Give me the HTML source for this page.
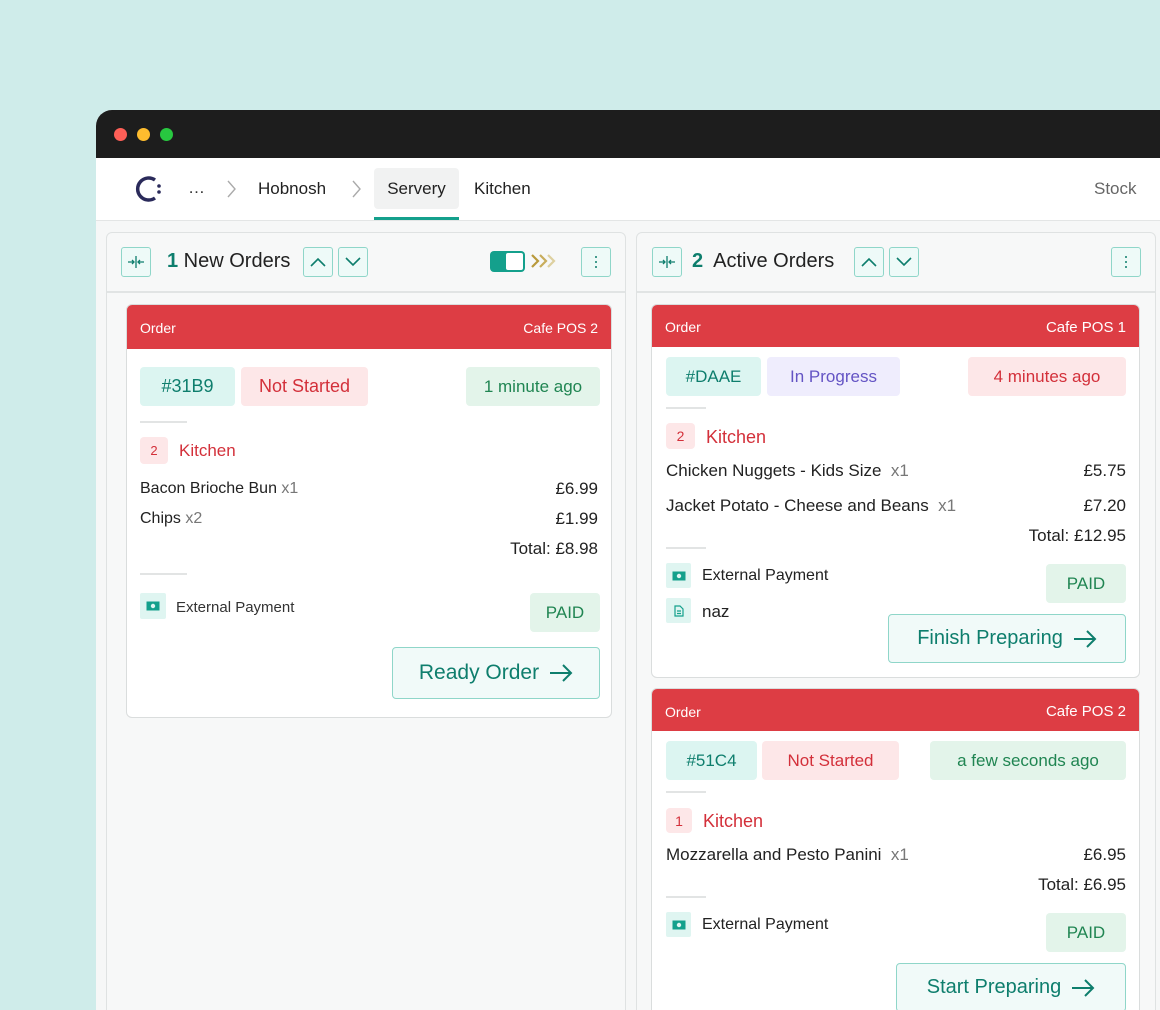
<!DOCTYPE html>
<html><head><meta charset="utf-8"><style>
*{box-sizing:border-box;margin:0;padding:0}
body{width:1160px;height:1000px;overflow:hidden;background:#cfecea;font-family:"Liberation Sans",sans-serif;position:relative;color:#222}
.a{position:absolute}
.win{left:96px;top:110px;width:1080px;height:900px;background:#f6f7f7;border-radius:16px 0 0 0;overflow:hidden}
.tb{left:0;top:0;width:100%;height:48px;background:#1d1d1d}
.dot{width:13px;height:13px;border-radius:50%;top:18px}
.nav{left:0;top:48px;width:100%;height:63px;background:#fff;border-bottom:1px solid #e3e5e5}
.col{background:#f7f8f8;border:1px solid #dfe2e2;border-radius:6px}
.chd{border-bottom:2px solid #e1e4e4}
.ib{width:30px;height:30px;border:1.5px solid #8fd6c9;background:#eefaf8;border-radius:3px;display:flex;align-items:center;justify-content:center}
.card{background:#fff;border:1px solid #dadddd;border-radius:6px;overflow:hidden}
.rh{left:0;top:0;width:100%;background:#dd3d44;color:#fff;font-size:14px}
.bd{border-radius:4px;display:flex;align-items:center;justify-content:center;font-size:18px;height:39px}
.t{background:#dcf5f1;color:#0e7e6d}
.r{background:#fde7e8;color:#d3303a}
.g{background:#e3f4ea;color:#208552}
.p{background:#efedfd;color:#6454c4}
.hr{width:47px;height:2px;background:#e2e4e4}
.btn{border:1.5px solid #8fd6c9;background:#f1faf9;border-radius:4px;color:#0e7e6d;font-size:21px;display:flex;align-items:center;justify-content:center;gap:10px}
.sq{width:26px;height:26px;background:#dff5f1;border-radius:2px;display:flex;align-items:center;justify-content:center}
</style></head><body>
<div class="a win">
 <div class="a tb">
  <div class="a dot" style="left:18px;background:#fe5f57"></div>
  <div class="a dot" style="left:41px;background:#febc2e"></div>
  <div class="a dot" style="left:64px;background:#28c840"></div>
 </div>
 <div class="a nav">
  <svg class="a" style="left:37px;top:15px" width="30" height="32" viewBox="0 0 30 32"><path d="M22 7 A11 11 0 1 0 22 25" fill="none" stroke="#2a2a5a" stroke-width="3.5"/><circle cx="26" cy="13" r="1.8" fill="#2a2a5a"/><circle cx="26" cy="19" r="1.8" fill="#2a2a5a"/></svg>
  <div class="a" style="left:92px;top:20px;font-size:17px;color:#333">…</div>
  <svg class="a" style="left:131px;top:22px" width="10" height="18"><path d="M1 1l7 8-7 8" stroke="#aaa" stroke-width="1.4" fill="none"/></svg>
  <div class="a" style="left:162px;top:21px;font-size:17px;color:#222">Hobnosh</div>
  <svg class="a" style="left:256px;top:22px" width="10" height="18"><path d="M1 1l7 8-7 8" stroke="#aaa" stroke-width="1.4" fill="none"/></svg>
  <div class="a" style="left:278px;top:10px;width:85px;height:41px;background:#f1f2f2;border-radius:4px;font-size:17px;text-align:center;line-height:41px">Servery</div>
  <div class="a" style="left:278px;top:59px;width:85px;height:3px;background:#14a08c"></div>
  <div class="a" style="left:378px;top:21px;font-size:17px">Kitchen</div>
  <div class="a" style="left:998px;top:21px;font-size:17px;color:#666">Stock</div>
 </div>

 <div class="a col" style="left:10px;top:122px;width:520px;height:800px">
  <div class="a chd" style="left:0;top:0;width:100%;height:60px">
   <div class="a ib" style="left:14px;top:14px"><svg width="18" height="12" viewBox="0 0 18 12" stroke="#0e7e6d" stroke-width="1.3" fill="none"><path d="M9 0v12M1 6h6M5 4l2 2-2 2M17 6h-6M13 4l-2 2 2 2"/></svg></div>
   <div class="a" style="left:60px;top:17px;font-size:20px"><b style="color:#0e7e6d">1</b> New Orders</div>
   <div class="a ib" style="left:196px;top:14px"><svg width="16" height="10"><path d="M1 9l7-7 7 7" stroke="#0e7e6d" stroke-width="1.6" fill="none"/></svg></div>
   <div class="a ib" style="left:231px;top:14px"><svg width="16" height="10"><path d="M1 1l7 7 7-7" stroke="#0e7e6d" stroke-width="1.6" fill="none"/></svg></div>
   <div class="a" style="left:383px;top:18px;width:35px;height:21px;background:#14a08c;border-radius:4px"><div class="a" style="left:16px;top:2px;width:17px;height:17px;background:#fff;border-radius:2px"></div></div>
   <svg class="a" style="left:423px;top:20px" width="28" height="16" viewBox="0 0 28 16" fill="none" stroke-width="2.2"><path d="M2 2l6 6-6 6" stroke="#b99a3c"/><path d="M10 2l6 6-6 6" stroke="#c8ad5c"/><path d="M18 2l6 6-6 6" stroke="#ddd0a0"/></svg>
   <div class="a ib" style="left:474px;top:14px"><svg width="4" height="14"><circle cx="2" cy="2" r="1" fill="#0e7e6d"/><circle cx="2" cy="7" r="1" fill="#0e7e6d"/><circle cx="2" cy="12" r="1" fill="#0e7e6d"/></svg></div>
  </div>
 </div>
 <div class="a card" style="left:30px;top:194px;width:486px;height:414px">
  <div class="a rh" style="height:44px"><span class="a" style="left:13px;top:15px">Order</span><span class="a" style="right:13px;top:15px">Cafe POS 2</span></div>
  <div class="a bd t" style="left:13px;top:62px;width:95px">#31B9</div>
  <div class="a bd r" style="left:114px;top:62px;width:127px">Not Started</div>
  <div class="a bd g" style="left:339px;top:62px;width:134px;font-size:17px">1 minute ago</div>
  <div class="a hr" style="left:13px;top:116px"></div>
  <div class="a bd r" style="left:13px;top:132px;width:28px;height:27px;font-size:13px">2</div>
  <div class="a" style="left:52px;top:136px;font-size:17px;color:#d3303a">Kitchen</div>
  <div class="a" style="left:13px;top:175px;font-size:16px">Bacon Brioche Bun <span style="color:#777">x1</span></div>
  <div class="a" style="right:13px;top:174px;font-size:17px">£6.99</div>
  <div class="a" style="left:13px;top:205px;font-size:16px">Chips <span style="color:#777">x2</span></div>
  <div class="a" style="right:13px;top:204px;font-size:17px">£1.99</div>
  <div class="a" style="right:13px;top:234px;font-size:17px">Total: £8.98</div>
  <div class="a hr" style="left:13px;top:268px"></div>
  <div class="a sq" style="left:13px;top:288px"><svg width="14" height="10"><rect x="0.5" y="0.5" width="13" height="9" fill="#14a08c"/><circle cx="7" cy="5" r="2.2" fill="#dff5f1"/></svg></div>
  <div class="a" style="left:49px;top:294px;font-size:15px;color:#333">External Payment</div>
  <div class="a bd g" style="left:403px;top:288px;width:70px;font-size:17px">PAID</div>
  <div class="a btn" style="left:265px;top:342px;width:208px;height:52px">Ready Order <svg width="24" height="18"><path d="M1 9h21M14 1l8 8-8 8" stroke="#0e7e6d" stroke-width="2" fill="none"/></svg></div>
 </div>

 <div class="a col" style="left:540px;top:122px;width:520px;height:800px">
  <div class="a chd" style="left:0;top:0;width:100%;height:60px">
   <div class="a ib" style="left:15px;top:14px"><svg width="18" height="12" viewBox="0 0 18 12" stroke="#0e7e6d" stroke-width="1.3" fill="none"><path d="M9 0v12M1 6h6M5 4l2 2-2 2M17 6h-6M13 4l-2 2 2 2"/></svg></div>
   <div class="a" style="left:55px;top:17px;font-size:20px"><b style="color:#0e7e6d">2</b>&nbsp; Active Orders</div>
   <div class="a ib" style="left:217px;top:14px"><svg width="16" height="10"><path d="M1 9l7-7 7 7" stroke="#0e7e6d" stroke-width="1.6" fill="none"/></svg></div>
   <div class="a ib" style="left:252px;top:14px"><svg width="16" height="10"><path d="M1 1l7 7 7-7" stroke="#0e7e6d" stroke-width="1.6" fill="none"/></svg></div>
   <div class="a ib" style="left:474px;top:14px"><svg width="4" height="14"><circle cx="2" cy="2" r="1" fill="#0e7e6d"/><circle cx="2" cy="7" r="1" fill="#0e7e6d"/><circle cx="2" cy="12" r="1" fill="#0e7e6d"/></svg></div>
  </div>
 </div>
 <div class="a card" style="left:555px;top:194px;width:489px;height:374px">
  <div class="a rh" style="height:42px"><span class="a" style="left:13px;top:14px">Order</span><span class="a" style="right:13px;top:14px;font-size:15px">Cafe POS 1</span></div>
  <div class="a bd t" style="left:14px;top:52px;width:95px;font-size:17px">#DAAE</div>
  <div class="a bd p" style="left:115px;top:52px;width:133px;font-size:17px">In Progress</div>
  <div class="a bd r" style="left:316px;top:52px;width:158px;font-size:17px">4 minutes ago</div>
  <div class="a hr" style="left:14px;top:102px;width:40px"></div>
  <div class="a bd r" style="left:14px;top:118px;width:29px;height:26px;font-size:14px">2</div>
  <div class="a" style="left:54px;top:122px;font-size:18px;color:#d3303a">Kitchen</div>
  <div class="a" style="left:14px;top:156px;font-size:17px">Chicken Nuggets - Kids Size&nbsp; <span style="color:#777">x1</span></div>
  <div class="a" style="right:13px;top:156px;font-size:17px">£5.75</div>
  <div class="a" style="left:14px;top:191px;font-size:17px">Jacket Potato - Cheese and Beans&nbsp; <span style="color:#777">x1</span></div>
  <div class="a" style="right:13px;top:191px;font-size:17px">£7.20</div>
  <div class="a" style="right:13px;top:221px;font-size:17px">Total: £12.95</div>
  <div class="a hr" style="left:14px;top:242px;width:40px"></div>
  <div class="a sq" style="left:14px;top:258px;width:25px;height:25px"><svg width="14" height="10"><rect x="0.5" y="0.5" width="13" height="9" fill="#14a08c"/><circle cx="7" cy="5" r="2.2" fill="#dff5f1"/></svg></div>
  <div class="a" style="left:50px;top:262px;font-size:16px">External Payment</div>
  <div class="a bd g" style="left:394px;top:259px;width:80px;font-size:17px">PAID</div>
  <div class="a sq" style="left:14px;top:293px;width:25px;height:25px"><svg width="10" height="12"><path d="M1 1h5l3 3v7H1z M3 6h4M3 8.5h4" stroke="#14a08c" stroke-width="1.2" fill="none"/></svg></div>
  <div class="a" style="left:50px;top:297px;font-size:17px">naz</div>
  <div class="a btn" style="left:236px;top:309px;width:238px;height:49px;font-size:20px">Finish Preparing <svg width="24" height="18"><path d="M1 9h21M14 1l8 8-8 8" stroke="#0e7e6d" stroke-width="2" fill="none"/></svg></div>
 </div>
 <div class="a card" style="left:555px;top:578px;width:489px;height:340px">
  <div class="a rh" style="height:42px"><span class="a" style="left:13px;top:15px">Order</span><span class="a" style="right:13px;top:14px;font-size:15px">Cafe POS 2</span></div>
  <div class="a bd t" style="left:14px;top:52px;width:91px;font-size:17px">#51C4</div>
  <div class="a bd r" style="left:110px;top:52px;width:137px;font-size:17px">Not Started</div>
  <div class="a bd g" style="left:278px;top:52px;width:196px;font-size:17px">a few seconds ago</div>
  <div class="a hr" style="left:14px;top:102px;width:40px"></div>
  <div class="a bd r" style="left:14px;top:119px;width:26px;height:25px;font-size:14px">1</div>
  <div class="a" style="left:51px;top:122px;font-size:18px;color:#d3303a">Kitchen</div>
  <div class="a" style="left:14px;top:156px;font-size:17px">Mozzarella and Pesto Panini&nbsp; <span style="color:#777">x1</span></div>
  <div class="a" style="right:13px;top:156px;font-size:17px">£6.95</div>
  <div class="a" style="right:13px;top:186px;font-size:17px">Total: £6.95</div>
  <div class="a hr" style="left:14px;top:207px;width:40px"></div>
  <div class="a sq" style="left:14px;top:223px;width:25px;height:25px"><svg width="14" height="10"><rect x="0.5" y="0.5" width="13" height="9" fill="#14a08c"/><circle cx="7" cy="5" r="2.2" fill="#dff5f1"/></svg></div>
  <div class="a" style="left:50px;top:227px;font-size:16px">External Payment</div>
  <div class="a bd g" style="left:394px;top:224px;width:80px;font-size:17px">PAID</div>
  <div class="a btn" style="left:244px;top:274px;width:230px;height:49px;font-size:20px">Start Preparing <svg width="24" height="18"><path d="M1 9h21M14 1l8 8-8 8" stroke="#0e7e6d" stroke-width="2" fill="none"/></svg></div>
 </div>
</div>
</body></html>
